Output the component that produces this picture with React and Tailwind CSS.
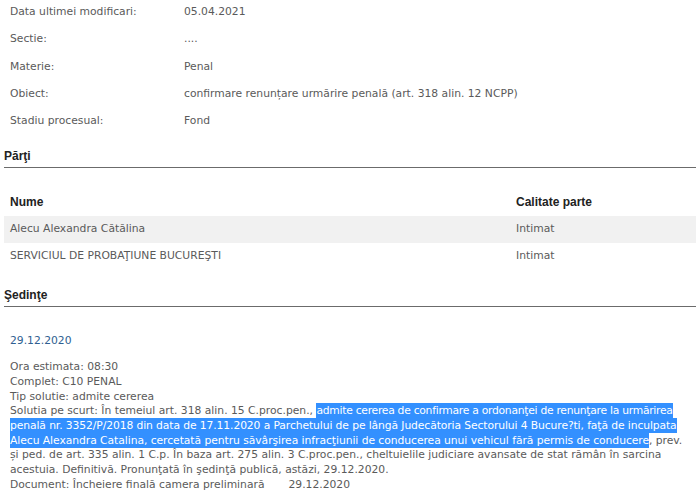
import React from 'react';

const info = [
  ['Data ultimei modificari:', '05.04.2021'],
  ['Sectie:', '....'],
  ['Materie:', 'Penal'],
  ['Obiect:', 'confirmare renunțare urmărire penală (art. 318 alin. 12 NCPP)'],
  ['Stadiu procesual:', 'Fond'],
];

const parti = [
  { nume: 'Alecu Alexandra Cătălina', calitate: 'Intimat' },
  { nume: 'SERVICIUL DE PROBAŢIUNE BUCUREŞTI', calitate: 'Intimat' },
];

const Sel = ({ children, className = '' }) => (
  <span className={`bg-[#3390ff] text-white py-[1px] ${className}`}>{children}</span>
);

const SectionTitle = ({ children }) => (
  <div className="border-b border-[#6b6b6b] h-[23px] leading-[22px] font-bold text-[12px] text-[#222] font-['Liberation_Sans',Arial,sans-serif]">
    {children}
  </div>
);

const App = () => {
  return (
    <div className="w-[700px] h-[497px] overflow-hidden bg-white px-[4px] text-[#5a5a5a] font-['DejaVu_Sans',Verdana,sans-serif] text-[10.75px]">
      {/* Detalii dosar */}
      <div className="-mt-[1.5px] mb-[10px]">
        {info.map(([label, value]) => (
          <div key={label} className="flex h-[27.3px] items-center px-[6px]">
            <span className="w-[174px]">{label}</span>
            <span>{value}</span>
          </div>
        ))}
      </div>

      <SectionTitle>Părţi</SectionTitle>

      <div className="mt-[21px]">
        <div className="flex h-[27px] items-center px-[6px] font-bold text-[12px] text-[#222] font-['Liberation_Sans',Arial,sans-serif]">
          <span className="w-[506px]">Nume</span>
          <span>Calitate parte</span>
        </div>
        {parti.map((p, i) => (
          <div
            key={p.nume}
            className={`flex h-[27px] items-center px-[6px] ${i === 0 ? 'bg-[#f1f1f1]' : ''}`}
          >
            <span className="w-[506px]">{p.nume}</span>
            <span>{p.calitate}</span>
          </div>
        ))}
      </div>

      <div className="mt-[14px]">
        <SectionTitle>Şedinţe</SectionTitle>
      </div>

      <div className="px-[6px] pt-[26px]">
        <div className="text-[#2f5f91] leading-[16px]">29.12.2020</div>
        <div className="mt-[11.5px] leading-[14.66px] whitespace-nowrap">
          <div>Ora estimata: 08:30</div>
          <div>Complet: C10 PENAL</div>
          <div>Tip solutie: admite cererea</div>
          <div>
            Solutia pe scurt: În temeiul art. 318 alin. 15 C.proc.pen.,{' '}
            <Sel className="tracking-[-0.27px]">admite cererea de confirmare a ordonanţei de renunţare la urmărirea </Sel>
          </div>
          <div className="tracking-[-0.1px]">
            <Sel>penală nr. 3352/P/2018 din data de 17.11.2020 a Parchetului de pe lângă Judecătoria Sectorului 4 Bucure?ti, faţă de inculpata </Sel>
          </div>
          <div className="tracking-[-0.05px]">
            <Sel>Alecu Alexandra Catalina, cercetată pentru săvârşirea infracţiunii de conducerea unui vehicul fără permis de conducere</Sel>, prev.
          </div>
          <div>și ped. de art. 335 alin. 1 C.p. În baza art. 275 alin. 3 C.proc.pen., cheltuielile judiciare avansate de stat rămân în sarcina</div>
          <div>acestuia. Definitivă. Pronunţată în şedinţă publică, astăzi, 29.12.2020.</div>
          <div>
            Document: Încheiere finală camera preliminară<span className="inline-block w-[24px]" />29.12.2020
          </div>
        </div>
      </div>
    </div>
  );
};

export default App;
